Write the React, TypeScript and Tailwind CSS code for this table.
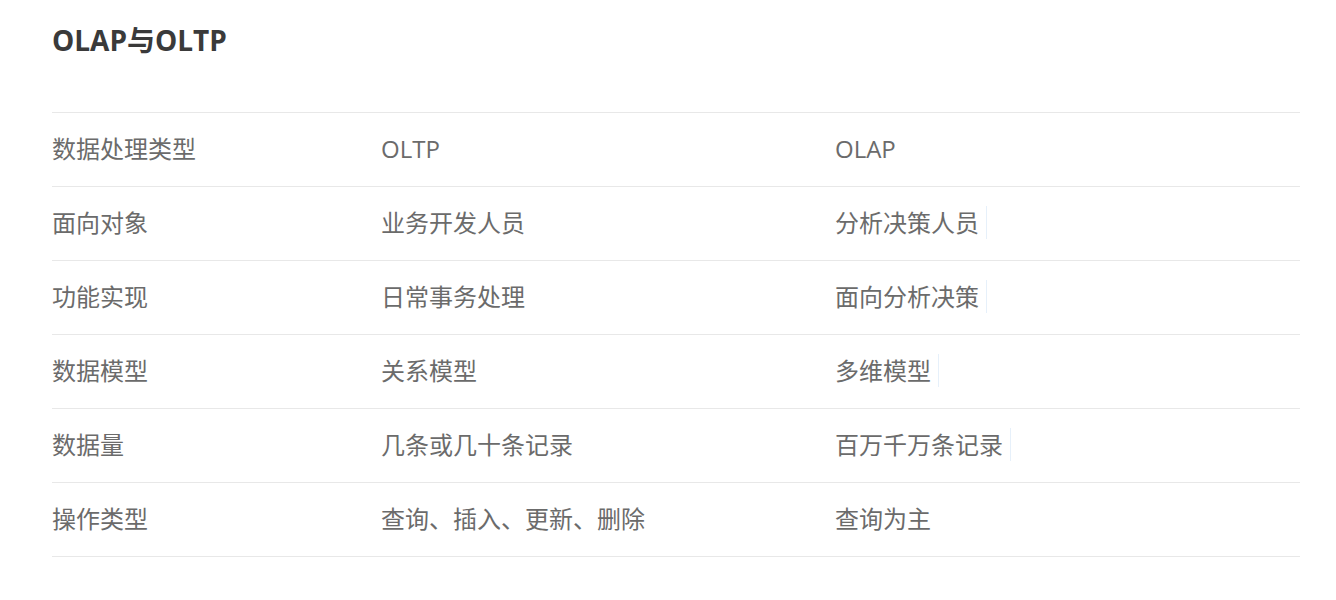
const rows: { label: string; oltp: string; olap: string; mark?: boolean }[] = [
  { label: "数据处理类型", oltp: "OLTP", olap: "OLAP" },
  { label: "面向对象", oltp: "业务开发人员", olap: "分析决策人员", mark: true },
  { label: "功能实现", oltp: "日常事务处理", olap: "面向分析决策", mark: true },
  { label: "数据模型", oltp: "关系模型", olap: "多维模型", mark: true },
  { label: "数据量", oltp: "几条或几十条记录", olap: "百万千万条记录", mark: true },
  { label: "操作类型", oltp: "查询、插入、更新、删除", olap: "查询为主" },
];

export default function App() {
  return (
    <div
      className="w-[1336px] h-[600px] bg-white pl-[52px] pt-[20px]"
      style={{ fontFamily: '"Open Sans", "Noto Sans CJK SC", sans-serif' }}
    >
      <h2 className="text-[28px] leading-[40px] font-bold text-[#3a3a3a]">OLAP与OLTP</h2>

      <div className="mt-[52px] w-[1248px] border-t border-[#e8e8e8]">
        {rows.map((row) => (
          <div
            key={row.label}
            className="grid grid-cols-[329px_454px_1fr] h-[74px] pb-[2px] items-center border-b border-[#e8e8e8] text-[24px] text-[#6b6b6b]"
          >
            <div>{row.label}</div>
            <div>{row.oltp}</div>
            <div className="flex items-center">
              <span>{row.olap}</span>
              {row.mark && <span className="ml-[7px] w-px h-[33px] bg-[#e6f0fa]" />}
            </div>
          </div>
        ))}
      </div>
    </div>
  );
}
